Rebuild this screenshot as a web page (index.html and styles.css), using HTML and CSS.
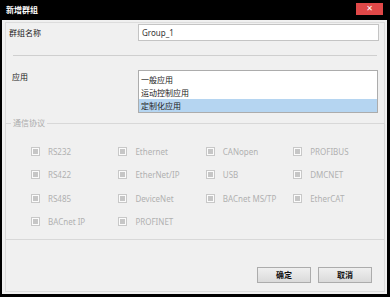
FILE: index.html
```html
<!DOCTYPE html>
<html lang="zh-CN">
<head>
<meta charset="utf-8">
<title>新增群组</title>
<link rel="stylesheet" href="styles.css">
</head>
<body>
<div class="window">
  <div class="titlebar">
    <span class="title">新增群组</span>
    <button class="close" type="button">✕</button>
  </div>
  <div class="client">
    <div class="frame">
      <div class="row name-row">
        <span class="label">群组名称</span>
        <div class="textbox">Group_1</div>
      </div>
      <div class="sep"></div>
      <div class="row app-row">
        <span class="label label-app">应用</span>
        <ul class="listbox">
          <li>一般应用</li>
          <li>运动控制应用</li>
          <li class="selected">定制化应用</li>
        </ul>
      </div>
      <fieldset class="group">
        <legend>通信协议</legend>
        <div class="proto-grid">
          <label class="proto"><span class="cb"></span>RS232</label>
          <label class="proto"><span class="cb"></span>Ethernet</label>
          <label class="proto"><span class="cb"></span>CANopen</label>
          <label class="proto"><span class="cb"></span>PROFIBUS</label>
          <label class="proto"><span class="cb"></span>RS422</label>
          <label class="proto"><span class="cb"></span>EtherNet/IP</label>
          <label class="proto"><span class="cb"></span>USB</label>
          <label class="proto"><span class="cb"></span>DMCNET</label>
          <label class="proto"><span class="cb"></span>RS485</label>
          <label class="proto"><span class="cb"></span>DeviceNet</label>
          <label class="proto"><span class="cb"></span>BACnet MS/TP</label>
          <label class="proto"><span class="cb"></span>EtherCAT</label>
          <label class="proto"><span class="cb"></span>BACnet IP</label>
          <label class="proto"><span class="cb"></span>PROFINET</label>
        </div>
      </fieldset>
      <div class="buttons">
        <button class="btn" type="button">确定</button>
        <button class="btn" type="button">取消</button>
      </div>
    </div>
  </div>
</div>
</body>
</html>
```

FILE: styles.css
```css
* { box-sizing: border-box; }
html, body { margin: 0; padding: 0; }
body {
  width: 390px;
  height: 297px;
  overflow: hidden;
  background: #000;
  font-family: "Noto Sans", "Noto Sans CJK SC", sans-serif;
  font-size: 8px;
}
.window {
  width: 390px;
  height: 297px;
  background: #000;
  padding: 0 3px 3px 2px;
  display: flex;
  flex-direction: column;
}
.titlebar {
  height: 20px;
  flex: none;
  display: flex;
  align-items: flex-start;
  justify-content: space-between;
  padding-left: 4px;
}
.title {
  color: #fff;
  font-weight: bold;
  font-family: "Noto Sans CJK SC", sans-serif;
  font-size: 8px;
  line-height: 20px;
}
.close {
  margin: 3px 4px 0 0;
  width: 27px;
  height: 12px;
  border: 0;
  padding: 0;
  background: #e04848;
  color: #fff;
  font-size: 8px;
  font-weight: bold;
  line-height: 12px;
  font-family: "DejaVu Sans", sans-serif;
}
.client {
  flex: 1;
  background: #f0f0f0;
  padding: 2px 2px 2px 3px;
  display: flex;
}
.frame {
  flex: 1;
  border: 1px solid #dcdcdc;
  display: flex;
  flex-direction: column;
}
.row {
  display: flex;
  align-items: flex-start;
}
.label {
  color: #222;
  font-family: "Noto Sans CJK SC", sans-serif;
  line-height: 13px;
}
.name-row {
  margin-top: 1px;
  padding-left: 3px;
  align-items: center;
  height: 17px;
}
.name-row .label { width: 129px; }
.textbox {
  width: 241px;
  height: 17px;
  border: 1px solid #c4c4c4;
  background: #fff;
  padding-left: 3px;
  line-height: 15px;
  color: #333;
}
.sep {
  margin: 14px 7px 0 7px;
  height: 1px;
  background: #cfcfcf;
}
.app-row {
  margin-top: 14px;
  padding-left: 6px;
}
.label-app { width: 126px; }
.listbox {
  list-style: none;
  margin: 0;
  width: 240px;
  height: 43px;
  border: 1px solid #acacac;
  background: #fff;
  padding: 2px 0 0 0;
  font-family: "Noto Sans CJK SC", sans-serif;
}
.listbox li {
  height: 13px;
  line-height: 13px;
  padding-left: 2px;
  color: #222;
}
.listbox li.selected { background: #b5d5f1; }
.group {
  margin: 5px -1px 0 -1px;
  border: 1px solid #d8d8d8;
  padding: 0 0 6px 5px;
  min-width: 0;
}
.group legend {
  padding: 0 2px;
  color: #ababab;
  font-family: "Noto Sans CJK SC", sans-serif;
  line-height: 10px;
}
.proto-grid {
  margin: 12px 0 0 20px;
  display: grid;
  grid-template-columns: repeat(4, 87.4px);
  grid-auto-rows: 23.33px;
}
.proto {
  display: flex;
  align-items: center;
  color: #b0b0b0;
  white-space: nowrap;
}
.cb {
  width: 9px;
  height: 9px;
  border: 1px solid #c8c8c8;
  background: #fbfbfb;
  padding: 1px;
  margin-right: 8px;
  flex: none;
}
.cb::after {
  content: "";
  display: block;
  width: 5px;
  height: 5px;
  background: #c6c6c6;
}
.buttons {
  flex: 1;
  display: flex;
  justify-content: flex-end;
  align-items: flex-end;
  gap: 7px;
  padding: 0 12px 8px 0;
}
.btn {
  width: 54px;
  height: 16px;
  border: 1px solid #acacac;
  background: linear-gradient(#efefef, #dadada);
  font-family: "Noto Sans CJK SC", sans-serif;
  font-weight: bold;
  font-size: 8px;
  color: #111;
  padding: 0;
  line-height: 14px;
}
```
